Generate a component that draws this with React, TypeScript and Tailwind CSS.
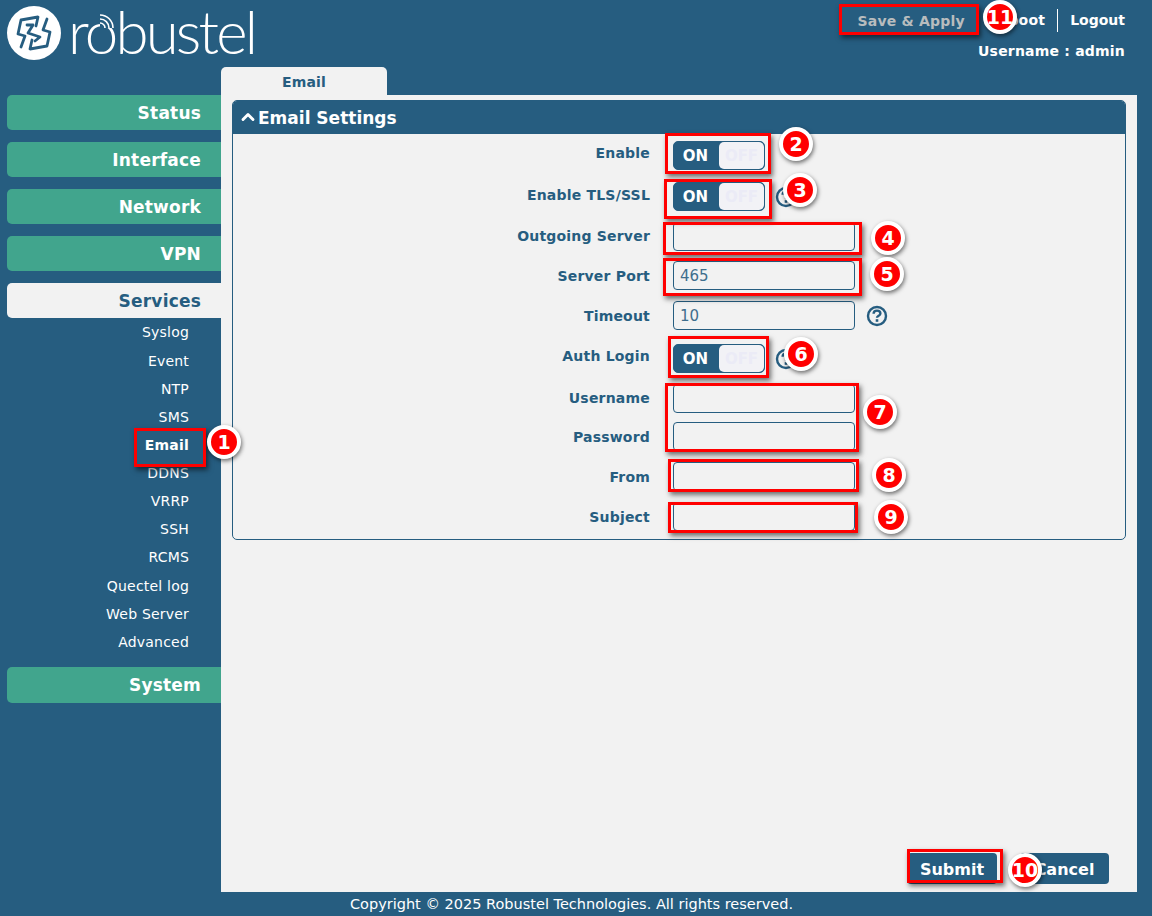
import { ChevronUp } from 'lucide-react'

const font = 'font-["DejaVu_Sans",Verdana,sans-serif]'

const mainMenu = ['Status', 'Interface', 'Network', 'VPN']
const subMenu = [
  { name: 'Syslog', cls: 'h-[29px]' },
  { name: 'Event', cls: 'h-[28px]' },
  { name: 'NTP', cls: 'h-[28px]' },
  { name: 'SMS', cls: 'h-[28px]' },
  { name: 'Email', cls: 'h-[28px] font-bold' },
  { name: 'DDNS', cls: 'h-[28px]' },
  { name: 'VRRP', cls: 'h-[28px]' },
  { name: 'SSH', cls: 'h-[28px]' },
  { name: 'RCMS', cls: 'h-[29px]' },
  { name: 'Quectel log', cls: 'h-[28px]' },
  { name: 'Web Server', cls: 'h-[28px]' },
  { name: 'Advanced', cls: 'h-[28px]' },
]

type Row = { label: string; cls: string; labelCls: string; type: 'toggle' | 'input'; value?: string; help?: boolean }

const rows: Row[] = [
  { label: 'Enable', cls: 'mt-[7px]', labelCls: 'pb-[4px]', type: 'toggle' },
  { label: 'Enable TLS/SSL', cls: 'mt-[12px]', labelCls: 'pb-[2px]', type: 'toggle', help: true },
  { label: 'Outgoing Server', cls: 'mt-[11px]', labelCls: '', type: 'input' },
  { label: 'Server Port', cls: 'mt-[10px]', labelCls: 'pt-[2px]', type: 'input', value: '465' },
  { label: 'Timeout', cls: 'mt-[11px]', labelCls: 'pt-[2px]', type: 'input', value: '10', help: true },
  { label: 'Auth Login', cls: 'mt-[14px]', labelCls: 'pb-[4px]', type: 'toggle', help: true },
  { label: 'Username', cls: 'mt-[11px]', labelCls: '', type: 'input' },
  { label: 'Password', cls: 'mt-[9px]', labelCls: 'pt-[2px]', type: 'input' },
  { label: 'From', cls: 'mt-[11px]', labelCls: 'pt-[2px]', type: 'input' },
  { label: 'Subject', cls: 'mt-[11px]', labelCls: 'pt-[2px]', type: 'input' },
]

const marks = [
  'left-[134px] top-[428px] w-[72px] h-[39px]',
  'left-[665px] top-[133px] w-[106px] h-[41px]',
  'left-[664px] top-[179px] w-[108px] h-[40px]',
  'left-[663px] top-[222px] w-[199px] h-[33px]',
  'left-[663px] top-[258px] w-[199px] h-[38px]',
  'left-[668px] top-[336px] w-[101px] h-[42px]',
  'left-[665px] top-[383px] w-[194px] h-[69px]',
  'left-[668px] top-[459px] w-[191px] h-[33px]',
  'left-[668px] top-[502px] w-[190px] h-[31px]',
  'left-[907px] top-[849px] w-[96px] h-[34px]',
  'left-[839px] top-[4px] w-[140px] h-[31px]',
]

const badges = [
  { n: 1, cls: 'left-[207px] top-[425px]' },
  { n: 2, cls: 'left-[779px] top-[127px]' },
  { n: 3, cls: 'left-[783px] top-[173px]' },
  { n: 4, cls: 'left-[871px] top-[221px]' },
  { n: 5, cls: 'left-[870px] top-[257px]' },
  { n: 6, cls: 'left-[784px] top-[337px]' },
  { n: 7, cls: 'left-[863px] top-[395px]' },
  { n: 8, cls: 'left-[872px] top-[458px]' },
  { n: 9, cls: 'left-[874px] top-[500px]' },
  { n: 10, cls: 'left-[1008px] top-[853px]' },
  { n: 11, cls: 'left-[983px] top-[0px]' },
]

function Toggle() {
  return (
    <div className="w-[92px] h-[29px] flex border border-[#265d80] rounded-[5px] bg-[#265d80] overflow-hidden text-[15px] font-bold">
      <span className="w-[45px] pt-[2px] pr-[2px] flex items-center justify-center text-white">ON</span>
      <span className="flex-1 pt-[2px] flex items-center justify-center bg-[#f2f2f6] rounded-[5px] text-[#ebebf6]">OFF</span>
    </div>
  )
}

function Help() {
  return (
    <svg width="22" height="22" viewBox="0 0 22 22" className="ml-[10px] shrink-0">
      <circle cx="11" cy="11" r="9" fill="none" stroke="#265d80" strokeWidth="2.4" />
      <path d="M7.6 8.8c0-2.1 1.5-3.2 3.4-3.2 2 0 3.4 1.1 3.4 2.8 0 2.4-3.4 2.3-3.4 4.4" fill="none" stroke="#265d80" strokeWidth="2.4" />
      <rect x="9.7" y="14.2" width="2.6" height="2.6" fill="#265d80" />
    </svg>
  )
}

export default function App() {
  return (
    <div className={`relative w-[1152px] h-[916px] overflow-hidden bg-[#265d80] ${font}`}>
      {/* Header */}
      <header className="h-[67px] flex justify-between">
        <div className="pl-[7px] pt-[6px] flex items-start">
          <svg width="54" height="54" viewBox="7 6 54 54" className="shrink-0">
            <circle cx="34" cy="33" r="27" fill="#fff" />
            <g fill="none" stroke="#265d80" strokeWidth="2.8" strokeLinejoin="round" strokeLinecap="round">
              <path d="M36 26 38 17 21 20 18 34 25 36 21 47" />
              <path d="M32 40 30 49 47 46 50 32 43 30 47 19" />
              <path d="M27 25 33 25 28 33 40 37 35 41" />
            </g>
          </svg>
          <div className="relative ml-[7px] -mt-[6px] text-[60px] leading-[62px] tracking-[-2.8px] font-['Lato'] font-light text-white">
            robustel
            <svg width="20" height="20" viewBox="0 0 20 20" className="absolute left-[29px] top-[11px]">
              <path d="M3 17V0H20V17Z" fill="#265d80" />
              <g fill="none" stroke="#fff" strokeWidth="1.6">
                <path d="M3 12a5 5 0 0 1 5 5" />
                <path d="M3 8a9 9 0 0 1 9 9" />
                <path d="M3 4a13 13 0 0 1 13 13" />
              </g>
            </svg>
          </div>
        </div>
        <div className="flex flex-col items-end pt-[7px] pr-[27px] text-[14px] tracking-[0.2px] font-bold text-white">
          <div className="flex items-center">
            <button className="w-[136px] h-[26px] pl-[17px] pt-[2px] bg-[#265d80] text-[#b8bcbe] text-[14px] tracking-[0.2px] font-bold rounded-[4px]">Save &amp; Apply</button>
            <span className="ml-[17px]">Reboot</span>
            <span className="mx-[12px] w-px h-[23px] bg-white" />
            <span className="tracking-normal">Logout</span>
          </div>
          <div className="mt-[8px]">Username : admin</div>
        </div>
      </header>

      <div className="flex">
        {/* Sidebar */}
        <aside className="w-[221px] shrink-0 pt-[28px] pl-[7px] text-[17px] tracking-[0.2px] font-bold">
          {mainMenu.map((m) => (
            <div key={m} className="h-[35px] mb-[12px] pt-[3px] bg-[#41a58d] rounded-l-[5px] text-white flex items-center justify-end pr-[20px]">
              {m}
            </div>
          ))}
          <div className="h-[35px] pt-[3px] bg-[#f2f2f2] rounded-l-[5px] text-[#265d80] flex items-center justify-end pr-[20px]">
            Services
          </div>
          <div className="text-[14px] tracking-[0.2px] font-normal text-white pb-[11px]">
            {subMenu.map((s) => (
              <div key={s.name} className={`${s.cls} flex items-center justify-end pr-[32px]`}>
                {s.name}
              </div>
            ))}
          </div>
          <div className="h-[36px] pt-[1px] bg-[#41a58d] rounded-l-[5px] text-white flex items-center justify-end pr-[20px]">
            System
          </div>
        </aside>

        {/* Main column */}
        <main className="w-[916px] shrink-0">
          <div className="w-[166px] h-[28px] bg-[#f2f2f2] rounded-t-[5px] text-[14px] tracking-[0.2px] font-bold text-[#265d80] flex items-center justify-center pt-[2px]">
            Email
          </div>
          <section className="relative h-[797px] bg-[#f2f2f2] pt-[5px] px-[11px]">
            <div className="h-[440px] border border-[#265d80] rounded-[5px] overflow-hidden">
              <h3 className="h-[34px] -mt-px -mx-px pt-[4px] bg-[#265d80] text-white text-[17px] font-bold flex items-center pl-[6px]">
                <ChevronUp size={20} strokeWidth={3.5} className="-mt-[4px]" />
                Email Settings
              </h3>
              {rows.map((r) => (
                <div key={r.label} className={`${r.cls} h-[29px] flex items-center`}>
                  <label className={`${r.labelCls} w-[417px] text-right text-[14px] tracking-[0.2px] font-bold text-[#265d80] shrink-0`}>{r.label}</label>
                  <div className="ml-[23px] flex items-center">
                    {r.type === 'toggle' ? (
                      <Toggle />
                    ) : (
                      <input
                        defaultValue={r.value}
                        className="w-[182px] h-[29px] mr-px border border-[#265d80] rounded-[4px] bg-transparent px-[6px] text-[15px] text-[#3f6e8d]"
                      />
                    )}
                    {r.help && <Help />}
                  </div>
                </div>
              ))}
            </div>
            <div className="absolute bottom-[8px] right-[28px] flex gap-[23px] text-[16px] font-bold text-white">
              <button className="w-[90px] h-[31px] pt-[3px] bg-[#265d80] rounded-[4px]">Submit</button>
              <button className="w-[89px] h-[31px] pt-[3px] bg-[#265d80] rounded-[4px]">Cancel</button>
            </div>
          </section>
        </main>
      </div>

      <footer className="h-[24px] pt-[2px] flex items-center justify-center text-[14.5px] text-white pr-[9px]">
        Copyright © 2025 Robustel Technologies. All rights reserved.
      </footer>

      {/* Tutorial annotations laid over the screenshot */}
      {marks.map((m) => (
        <div key={m} className={`absolute ${m} border-[3px] border-[#ff0000] shadow-[2px_3px_5px_rgba(0,0,0,0.55)]`} />
      ))}
      {badges.map((b) => (
        <div
          key={b.n}
          className={`absolute ${b.cls} w-[34px] h-[34px] rounded-full bg-[#ff0000] border-[4px] border-white shadow-[1px_2px_4px_rgba(0,0,0,0.55)] flex items-center justify-center text-white text-[19px] font-bold`}
        >
          {b.n}
        </div>
      ))}
    </div>
  )
}
